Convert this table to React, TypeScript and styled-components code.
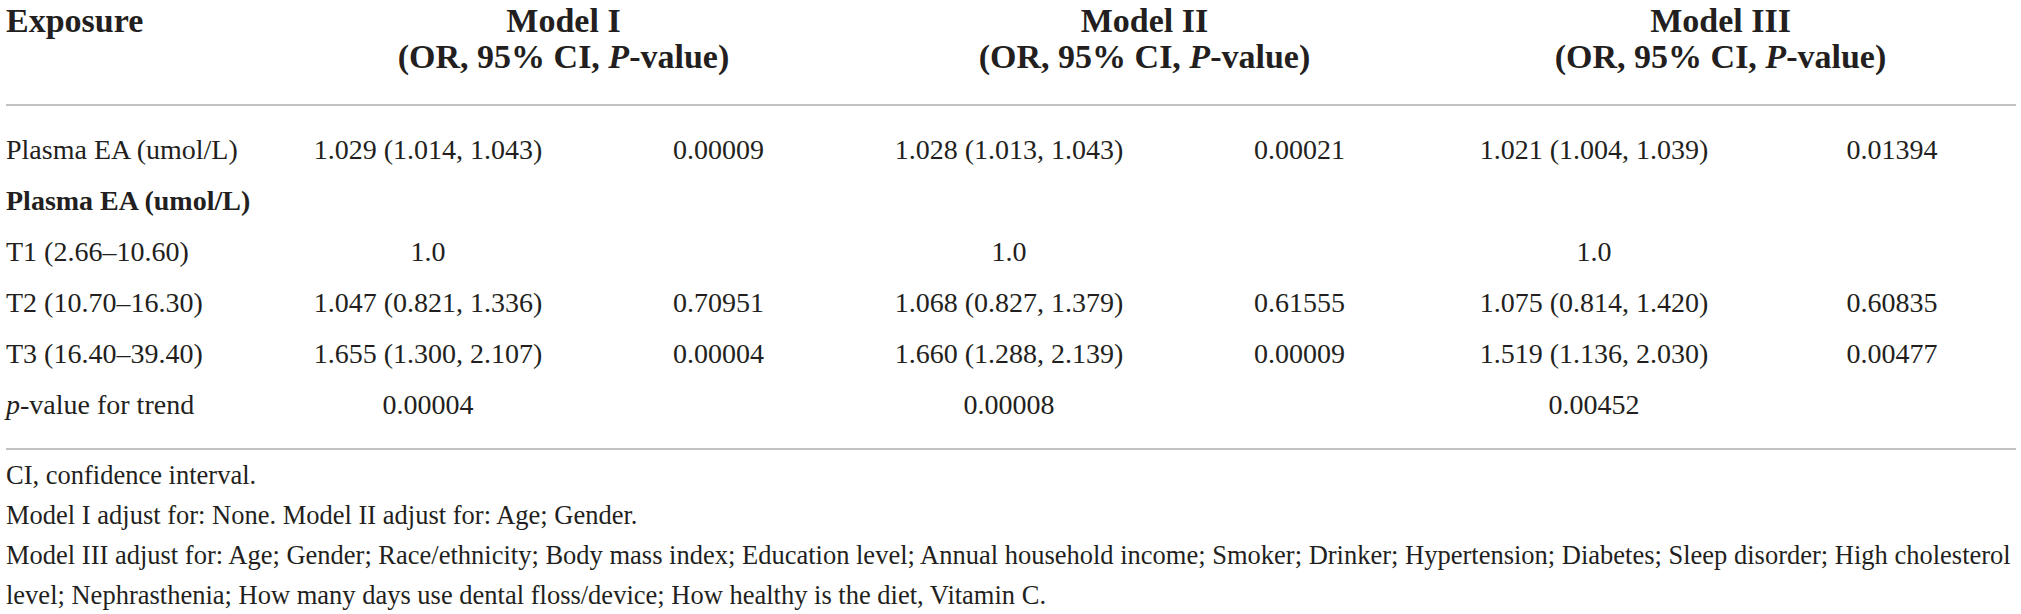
import { ReactNode } from 'react'
import styled, { createGlobalStyle } from 'styled-components'

const COLS = '277px 290px 291px 290px 291px 298px 1fr'

type DataRow = {
  label: ReactNode
  bold?: boolean
  cells: string[]
}

const rows: DataRow[] = [
  {
    label: 'Plasma EA (umol/L)',
    cells: ['1.029 (1.014, 1.043)', '0.00009', '1.028 (1.013, 1.043)', '0.00021', '1.021 (1.004, 1.039)', '0.01394'],
  },
  { label: 'Plasma EA (umol/L)', bold: true, cells: ['', '', '', '', '', ''] },
  { label: 'T1 (2.66–10.60)', cells: ['1.0', '', '1.0', '', '1.0', ''] },
  {
    label: 'T2 (10.70–16.30)',
    cells: ['1.047 (0.821, 1.336)', '0.70951', '1.068 (0.827, 1.379)', '0.61555', '1.075 (0.814, 1.420)', '0.60835'],
  },
  {
    label: 'T3 (16.40–39.40)',
    cells: ['1.655 (1.300, 2.107)', '0.00004', '1.660 (1.288, 2.139)', '0.00009', '1.519 (1.136, 2.030)', '0.00477'],
  },
  {
    label: (
      <>
        <i>p</i>-value for trend
      </>
    ),
    cells: ['0.00004', '', '0.00008', '', '0.00452', ''],
  },
]

const models = ['Model I', 'Model II', 'Model III']

function App() {
  return (
    <>
      <GlobalStyle />
      <Page>
        <HeaderRow>
          <HeadLabel>Exposure</HeadLabel>
          {models.map((m) => (
            <HeadCell key={m}>
              {m}
              <br />
              (OR, 95% CI, <i>P</i>-value)
            </HeadCell>
          ))}
        </HeaderRow>
        <Body>
          {rows.map((r, i) => (
            <Row key={i}>
              <Label $bold={r.bold}>{r.label}</Label>
              {r.cells.map((c, j) => (
                <Cell key={j}>{c}</Cell>
              ))}
            </Row>
          ))}
        </Body>
        <Notes>
          <Note>CI, confidence interval.</Note>
          <Note>Model I adjust for: None. Model II adjust for: Age; Gender.</Note>
          <Note>
            Model III adjust for: Age; Gender; Race/ethnicity; Body mass index; Education level; Annual household
            income; Smoker; Drinker; Hypertension; Diabetes; Sleep disorder; High cholesterol
          </Note>
          <Note>level; Nephrasthenia; How many days use dental floss/device; How healthy is the diet, Vitamin C.</Note>
        </Notes>
      </Page>
    </>
  )
}

const GlobalStyle = createGlobalStyle`
  body {
    margin: 0;
    background: #fff;
  }
`

const Page = styled.div`
  padding: 3px 5px 0 6px;
  font-family: "Liberation Serif", "Times New Roman", serif;
  color: #231f20;
`

const HeaderRow = styled.div`
  display: grid;
  grid-template-columns: ${COLS};
  padding-bottom: 29px;
  border-bottom: 2px solid #c2c2c2;
  font-size: 34px;
  font-weight: 700;
  line-height: 36px;
`

const HeadLabel = styled.div`
  text-align: left;
`

const HeadCell = styled.div`
  grid-column: span 2;
  text-align: center;
  padding-right: 20px;
`

const Body = styled.div`
  padding: 18px 0 18px;
  border-bottom: 2px solid #c2c2c2;
`

const Row = styled.div`
  display: grid;
  grid-template-columns: ${COLS};
  height: 51px;
  align-items: center;
  font-size: 28px;
  line-height: 51px;

  & > *:nth-child(7) {
    padding-left: 25px;
  }
`

const Label = styled.div<{ $bold?: boolean }>`
  font-weight: ${(p) => (p.$bold ? 700 : 400)};
  white-space: nowrap;
`

const Cell = styled.div`
  text-align: center;
  white-space: nowrap;
`

const Notes = styled.div`
  padding-top: 5px;
`

const Note = styled.div`
  font-size: 26.5px;
  line-height: 40px;
  white-space: nowrap;
`

export default App
